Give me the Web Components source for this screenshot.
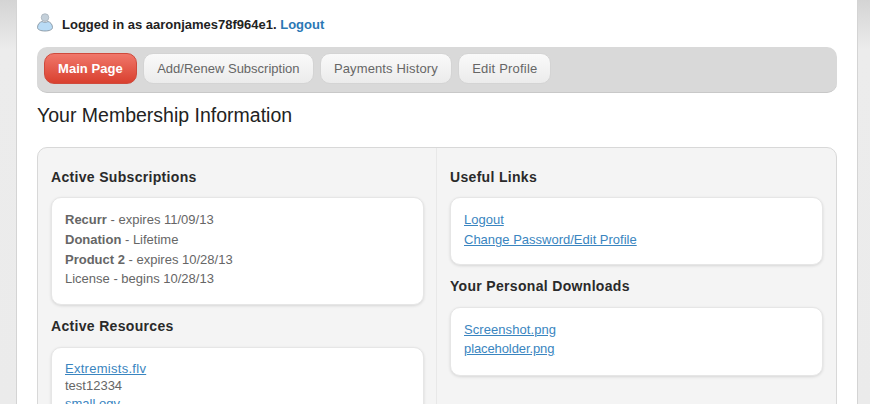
<!DOCTYPE html>
<html>
<head>
<meta charset="utf-8">
<title>Your Membership Information</title>
<style>
html, body { margin: 0; height: 404px; overflow: hidden; }
body {
    background: linear-gradient(#d4d4d4, #ececec 50px, #ebebeb);
    font-family: "Liberation Sans", Arial, sans-serif;
    font-size: 13px;
    color: #666;
}
</style>
</head>
<body>
<member-page>
    <login-line name="aaronjames78f964e1"></login-line>
    <nav-bar>
        <nav-pill active style="letter-spacing: .05px">Main Page</nav-pill>
        <nav-pill>Add/Renew Subscription</nav-pill>
        <nav-pill style="letter-spacing: .13px">Payments History</nav-pill>
        <nav-pill style="letter-spacing: .19px">Edit Profile</nav-pill>
    </nav-bar>
    <page-title>Your Membership Information</page-title>
    <info-panel>
        <info-section slot="left" heading="Active Subscriptions" first style="--pad-top: 12.450px; --pad-bottom: 15.550px">
            <div>
                <div><b>Recurr</b> - expires 11/09/13</div>
                <div><b>Donation</b> - Lifetime</div>
                <div><b>Product 2</b> - expires 10/28/13</div>
                <div>License - begins 10/28/13</div>
            </div>
        </info-section>
        <info-section slot="left" heading="Active Resources" style="--row: 17.500px; --pad-top: 12px">
            <file-link style="letter-spacing: .28px">Extremists.flv</file-link>
            <div>test12334</div>
            <file-link>small.ogv</file-link>
            <div>test12334</div>
        </info-section>
        <info-section slot="right" heading="Useful Links" first style="--pad-bottom: 14.700px">
            <file-link>Logout</file-link>
            <file-link>Change Password/Edit Profile</file-link>
        </info-section>
        <info-section slot="right" heading="Your Personal Downloads" style="--row: 19px; --pad-bottom: 16.900px">
            <file-link style="letter-spacing: .07px">Screenshot.png</file-link>
            <file-link style="letter-spacing: -.1px">placeholder.png</file-link>
        </info-section>
    </info-panel>
</member-page>

<script>
class MemberPage extends HTMLElement {
    constructor() {
        super()
        this.attachShadow({ mode: 'open' })
        this.shadowRoot.innerHTML = `
            <style>
                :host {
                    display: block;
                    box-sizing: border-box;
                    width: 842px;
                    height: 404px;
                    margin-left: 16px;
                    padding: 0 20px;
                    background: #fff;
                    border-left: 1px solid #d4d4d4;
                    border-right: 1px solid #d4d4d4;
                    overflow: hidden;
                }
            </style>
            <slot></slot>
        `
    }
}

class LoginLine extends HTMLElement {
    constructor() {
        super()
        this.attachShadow({ mode: 'open' })
    }

    connectedCallback() {
        this.shadowRoot.innerHTML = `
            <style>
                :host {
                    display: flex;
                    align-items: center;
                    gap: 9px;
                    height: 47px;
                    padding-top: 1px;
                    box-sizing: border-box;
                    font-weight: bold;
                    color: #222;
                }
                svg { margin-top: -4px; }
                a { color: #2b78b5; text-decoration: none; }
            </style>
            <svg width="16" height="19" viewBox="0 0 16 19">
                <circle cx="8" cy="4.500" r="3.800" fill="#c4d0da" stroke="#98a4ae" stroke-width=".6"/>
                <path d="M.5 14.500c0-3.500 2.500-5.500 4.500-6 1.500 1 4.500 1 6 0 2 .5 4.500 2.500 4.500 6 0 2.200-3.200 3.500-7.500 3.500s-7.500-1.300-7.500-3.500z" fill="#b9dbf5" stroke="#7d8a96" stroke-width=".8"/>
            </svg>
            <span>Logged in as ${this.getAttribute('name')}. <a href="#">Logout</a></span>
        `
    }
}

class NavBar extends HTMLElement {
    constructor() {
        super()
        this.attachShadow({ mode: 'open' })
        this.shadowRoot.innerHTML = `
            <style>
                :host {
                    display: flex;
                    gap: 6.400px;
                    box-sizing: border-box;
                    height: 46px;
                    padding: 6px 7px;
                    background: #d9d9d9;
                    border-radius: 10px;
                    border-bottom: 1px solid #c8c8c8;
                }
            </style>
            <slot></slot>
        `
    }
}

class NavPill extends HTMLElement {
    constructor() {
        super()
        this.attachShadow({ mode: 'open' })
        this.shadowRoot.innerHTML = `
            <style>
                :host {
                    display: flex;
                    align-items: center;
                    box-sizing: border-box;
                    height: 31px;
                    padding: 0 13px;
                    border: 1px solid #d4d4d4;
                    border-radius: 10px;
                    background: linear-gradient(#fafafa, #ebebeb);
                    color: #666;
                }
                :host([active]) {
                    border-color: #cf4a3c;
                    background: linear-gradient(#f0776a, #d9402f);
                    color: #fff;
                    font-weight: bold;
                }
            </style>
            <slot></slot>
        `
    }
}

class PageTitle extends HTMLElement {
    constructor() {
        super()
        this.attachShadow({ mode: 'open' })
        this.shadowRoot.innerHTML = `
            <style>
                :host {
                    display: block;
                    height: 54px;
                    padding-top: 10px;
                    box-sizing: border-box;
                    font-size: 19.500px;
                    line-height: 24px;
                    color: #222;
                }
            </style>
            <slot></slot>
        `
    }
}

class InfoPanel extends HTMLElement {
    constructor() {
        super()
        this.attachShadow({ mode: 'open' })
        this.shadowRoot.innerHTML = `
            <style>
                :host {
                    display: grid;
                    grid-template-columns: 399px 1fr;
                    box-sizing: border-box;
                    width: 800px;
                    background: #f4f4f4;
                    border: 1px solid #d8d8d8;
                    border-radius: 10px;
                    min-height: 400px;
                }
                .col { padding: 0 13px; }
                .left { border-right: 1px solid #e8e8e8; padding-right: 12px; }
            </style>
            <div class="col left"><slot name="left"></slot></div>
            <div class="col"><slot name="right"></slot></div>
        `
    }
}

class InfoSection extends HTMLElement {
    constructor() {
        super()
        this.attachShadow({ mode: 'open' })
    }

    connectedCallback() {
        this.shadowRoot.innerHTML = `
            <style>
                :host { display: block; }
                h3 {
                    margin: 0;
                    padding: 11.500px 0 12px;
                    font-size: 14px;
                    line-height: 18px;
                    color: #2a2a2a;
                    letter-spacing: .32px;
                }
                :host([first]) h3 { padding: 20px 0 11px; }
                .card {
                    padding: var(--pad-top, 12.300px) 13px var(--pad-bottom, 15.700px);
                    background: #fff;
                    border: 1px solid #e6e6e6;
                    border-radius: 10px;
                    box-shadow: 0 1px 3px rgba(0, 0, 0, .12);
                    line-height: var(--row, 19.600px);
                }
            </style>
            <h3>${this.getAttribute('heading')}</h3>
            <div class="card"><slot></slot></div>
        `
    }
}

class FileLink extends HTMLElement {
    constructor() {
        super()
        this.attachShadow({ mode: 'open' })
        this.shadowRoot.innerHTML = `
            <style>
                :host { display: block; }
                a { color: #3a85c0; text-decoration: underline; }
            </style>
            <a href="#"><slot></slot></a>
        `
    }
}

customElements.define('member-page', MemberPage)
customElements.define('login-line', LoginLine)
customElements.define('nav-bar', NavBar)
customElements.define('nav-pill', NavPill)
customElements.define('page-title', PageTitle)
customElements.define('info-panel', InfoPanel)
customElements.define('info-section', InfoSection)
customElements.define('file-link', FileLink)
</script>
</body>
</html>
